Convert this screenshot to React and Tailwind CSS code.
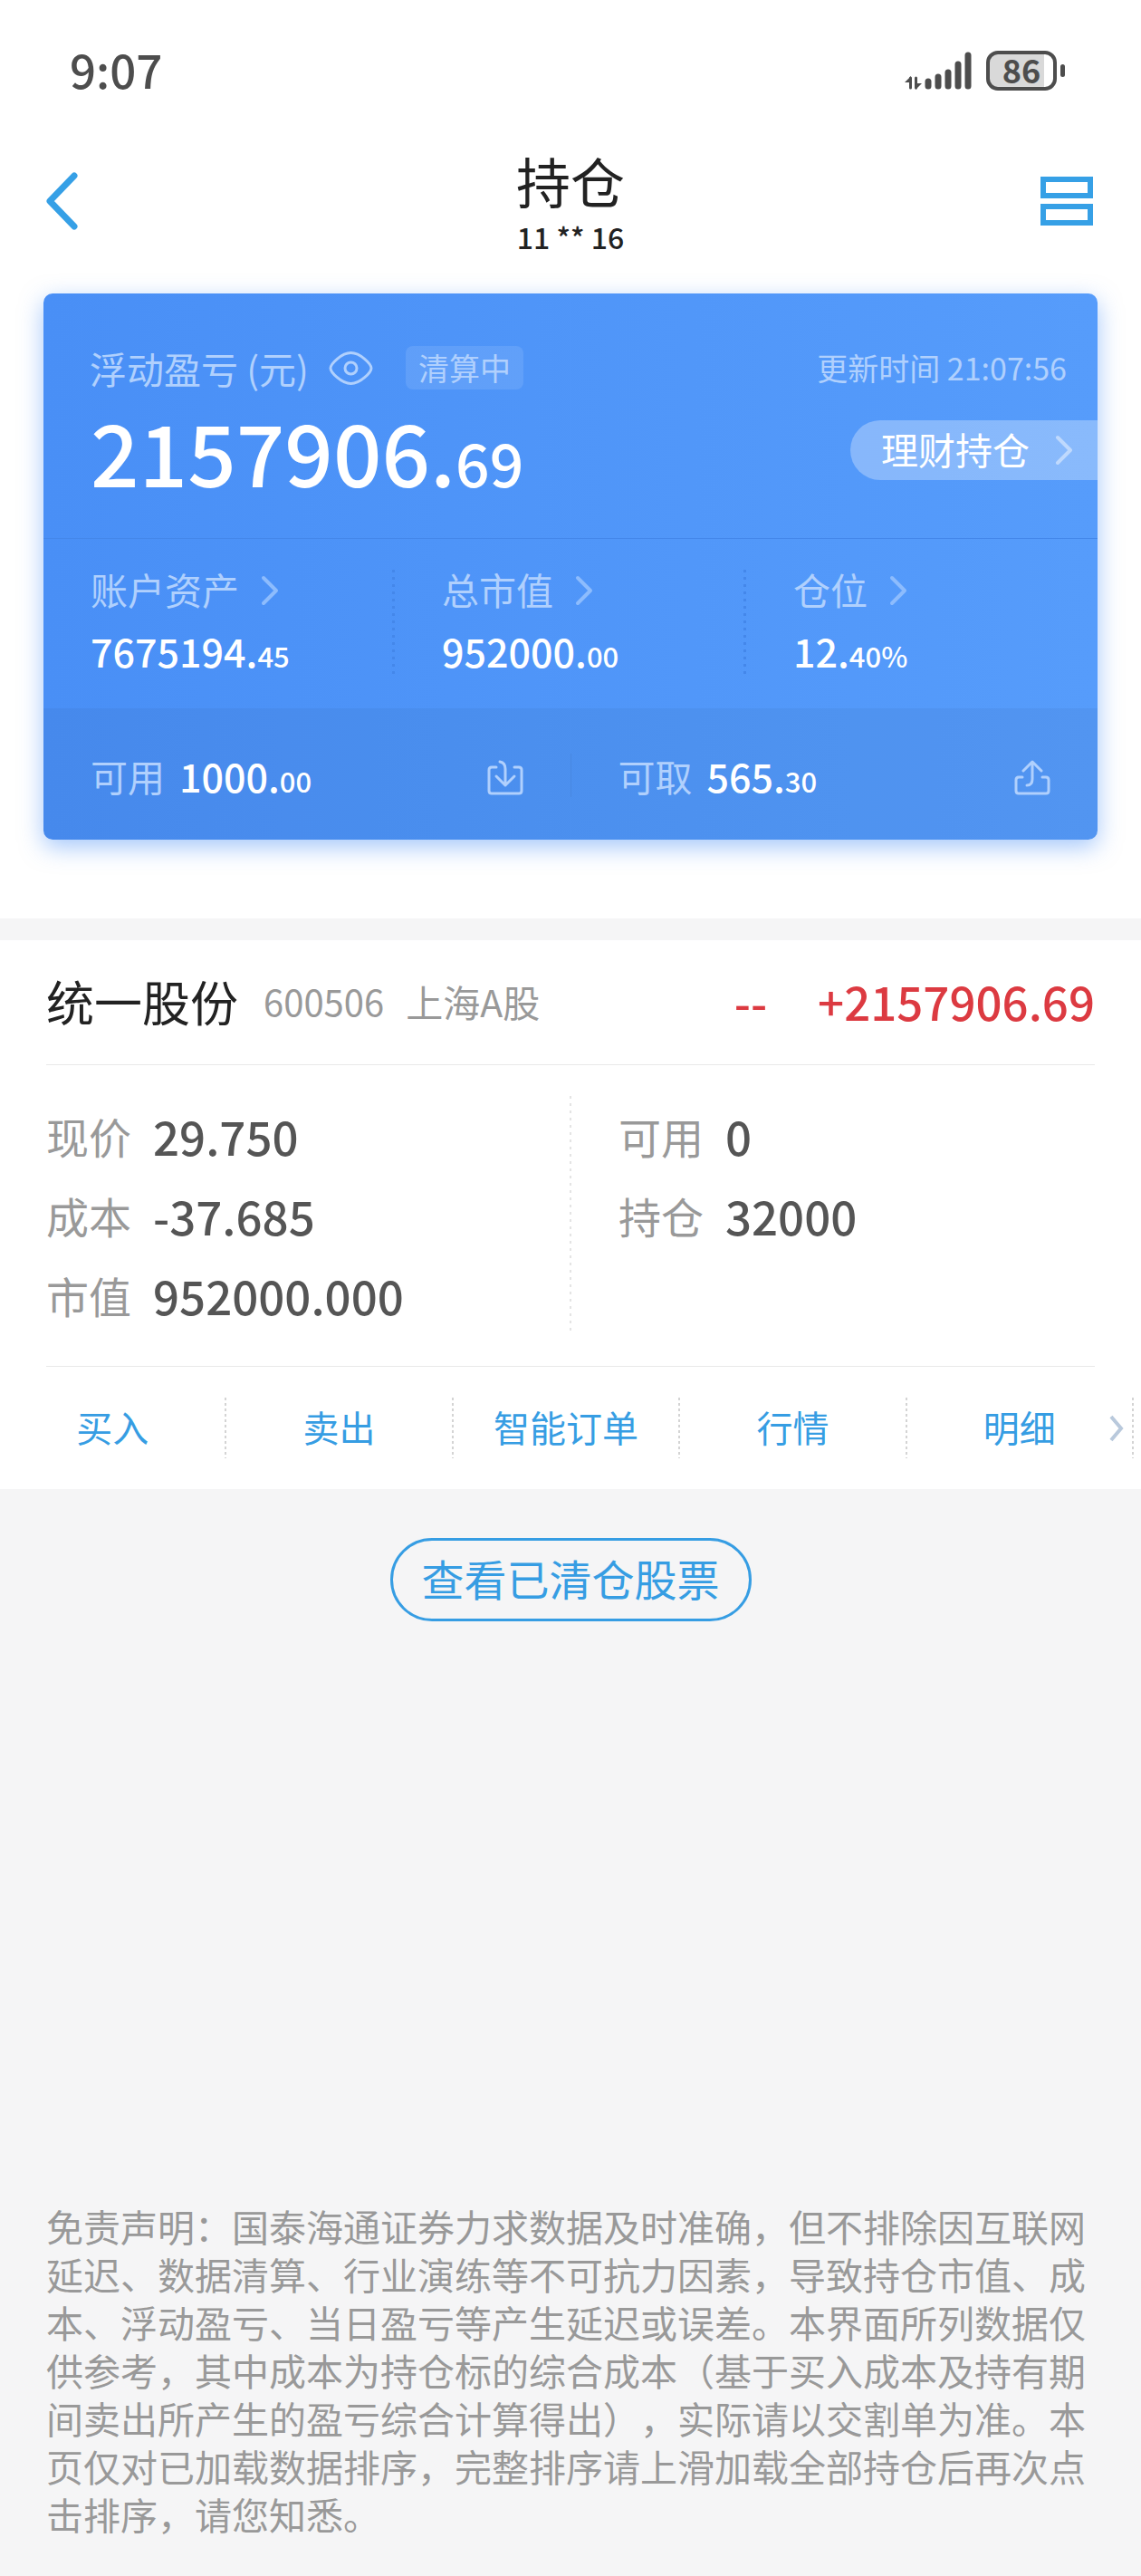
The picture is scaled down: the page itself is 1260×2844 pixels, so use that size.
const holding = {
  name: '统一股份',
  code: '600506',
  market: '上海A股',
  change: '--',
  profit: '+2157906.69',
};

const leftStats = [
  { label: '现价', value: '29.750' },
  { label: '成本', value: '-37.685' },
  { label: '市值', value: '952000.000' },
];

const rightStats = [
  { label: '可用', value: '0' },
  { label: '持仓', value: '32000' },
];

const actions = ['买入', '卖出', '智能订单', '行情', '明细'];

function App() {
  return (
    <div className="min-h-screen flex flex-col bg-[#f5f5f6] font-['Noto_Sans_CJK_SC',sans-serif] text-[#222222]">
      <div className="bg-white pb-[87px]">
        <StatusBar />
        <NavBar />
        <AssetCard />
      </div>

      {/* Holding */}
      <section className="mt-6 bg-white">
        <div className="mx-[51px] h-[138px] pb-1 flex items-center border-b border-[#e8e8e8]">
          <h2 className="text-[53px] leading-[64px]">{holding.name}</h2>
          <span className="ml-7 text-[40px] leading-[64px] text-[#999999]">{holding.code}</span>
          <span className="ml-6 text-[41px] leading-[64px] text-[#999999]">{holding.market}</span>
          <span className="ml-auto text-[51px] leading-[64px] font-medium text-[#dc3a41]">{holding.change}</span>
          <span className="ml-14 text-[51px] leading-[64px] font-medium text-[#dc3a41]">{holding.profit}</span>
        </div>

        <div className="mx-[51px] pt-[34px] pb-[34px] flex border-b border-[#e8e8e8]">
          <StatList items={leftStats} />
          <div className="w-[2px] bg-[repeating-linear-gradient(to_bottom,#e4e4e4_0_3px,transparent_3px_8px)]"></div>
          <StatList items={rightStats} indent />
        </div>

        {/* Actions */}
        <nav className="relative h-[135px] pr-2 flex items-center">
          {actions.map((action) => (
            <button key={action} className="flex-1 h-[67px] flex items-center text-[40px] leading-[60px] text-[#369de3]">
              <span className="flex-1 text-center pb-1">{action}</span>
              <span className="w-[2px] h-full bg-[repeating-linear-gradient(to_bottom,#d4d4d4_0_3px,transparent_3px_6px)]"></span>
            </button>
          ))}
          <svg className="absolute right-[18px] top-[53px] w-[18px] h-[30px]" viewBox="0 0 18 30" fill="none" stroke="#b9c9dc" strokeWidth="4">
            <path d="M3 2l11 13L3 28" />
          </svg>
        </nav>
      </section>

      <button className="mt-[54px] mb-20 mx-auto h-[92px] px-8 pb-1 rounded-full border-3 border-[#369de3] text-[47px] leading-[68px] text-[#369de3]">
        查看已清仓股票
      </button>

      <p className="mt-auto mx-[51px] pb-[42px] text-[41px] leading-[53px] text-[#999999] [text-spacing-trim:space-all]">
        免责声明：国泰海通证券力求数据及时准确，但不排除因互联网延迟、数据清算、行业演练等不可抗力因素，导致持仓市值、成本、浮动盈亏、当日盈亏等产生延迟或误差。本界面所列数据仅供参考，其中成本为持仓标的综合成本（基于买入成本及持有期间卖出所产生的盈亏综合计算得出），实际请以交割单为准。本页仅对已加载数据排序，完整排序请上滑加载全部持仓后再次点击排序，请您知悉。
      </p>
    </div>
  );
}

function StatusBar() {
  return (
    <div className="h-[152px] pl-[77px] pr-[84px] flex items-center justify-between text-[#4d4d4d]">
      <span className="text-[51px] leading-[64px] font-medium">9:07</span>
      <div className="pt-1 flex items-center">
        <svg className="w-[74px] h-[42px] mr-4" viewBox="0 0 74 42" fill="none" stroke="currentColor">
          <g strokeWidth="7" strokeLinecap="round">
            <path d="M26 33v5M37 28v10M48 23v15M59 14v24M70 4v34" />
          </g>
          <path d="M6.500 29v11M12.500 29v11" strokeWidth="3" strokeLinecap="round" />
          <path d="M0 34l7-7v7zM19 35l-7 7v-7z" fill="currentColor" stroke="none" />
        </svg>
        <div className="w-[78px] h-11 rounded-[13px] border-4 border-[#4d4d4d] bg-[linear-gradient(to_right,#d9d9d9_86%,#ffffff_86%)] flex items-center justify-center">
          <span className="pb-1 text-[36px] leading-9 font-bold">86</span>
        </div>
        <div className="ml-1 w-[5px] h-[14px] rounded-full bg-[#4d4d4d]"></div>
      </div>
    </div>
  );
}

function NavBar() {
  return (
    <header className="h-[140px] mb-8 px-[51px] flex items-center justify-between">
      <button aria-label="返回" className="w-[60px]">
        <svg className="w-9 h-16" viewBox="0 0 36 64" fill="none" stroke="#36a0e6" strokeWidth="7" strokeLinecap="round" strokeLinejoin="round">
          <path d="M31 4L4 32l27 28" />
        </svg>
      </button>
      <div className="pt-[2px] text-center">
        <h1 className="text-[60px] leading-[76px]">持仓</h1>
        <p className="text-[32px] leading-[48px] font-medium">11 ** 16</p>
      </div>
      <button aria-label="菜单" className="w-[60px]">
        <svg className="w-[58px] h-[56px]" viewBox="0 0 58 56" fill="none" stroke="#36a0e6" strokeWidth="6">
          <path d="M3 4h52v18H3zM3 34h52v18H3z" />
        </svg>
      </button>
    </header>
  );
}

function AssetCard() {
  return (
    <section className="mx-12 rounded-[10px] overflow-hidden bg-linear-to-r from-[#498ff6] to-[#569cfb] text-white shadow-[0_8px_26px_rgba(74,144,247,0.5)]">
      <div className="pt-[58px] pb-12">
        <div className="h-12 pl-[51px] pr-[34px] flex items-center text-[#b0d0fd]">
          <span className="text-[41px] leading-[48px]">浮动盈亏 (元)</span>
          <svg className="ml-[22px] w-[49px] h-[37px]" viewBox="0 0 49 37" fill="none" stroke="currentColor" strokeWidth="3">
            <path d="M2 18.5C2 14 14 1.5 24.5 1.5S47 14 47 18.5 35 35.5 24.5 35.5 2 23 2 18.5z" />
            <circle cx="24.5" cy="18.5" r="6.5" />
          </svg>
          <span className="ml-9 px-[14px] rounded-lg bg-white/10 text-[34px] leading-[48px]">清算中</span>
          <span className="ml-auto text-[34px] leading-[48px]">更新时间 21:07:56</span>
        </div>
        <div className="mt-[18px] pl-[52px] flex items-center justify-between">
          <p className="text-[94px] leading-[98px] font-medium">
            2157906.<span className="text-[66px] leading-none">69</span>
          </p>
          <button className="h-[66px] pl-[34px] pr-[27px] flex items-center rounded-l-full bg-white/30">
            <span className="pb-1 text-[41px] leading-[50px]">理财持仓</span>
            <Chevron className="ml-7 text-[#bfd9fd]" />
          </button>
        </div>
      </div>

      <div className="pt-[30px] pb-[38px] grid grid-cols-3 border-t border-[#4487ea]">
        <Asset label="账户资产" whole="7675194." decimal="45" divider />
        <Asset label="总市值" whole="952000." decimal="00" divider />
        <Asset label="仓位" whole="12." decimal="40%" />
      </div>

      <div className="h-[145px] pt-[2px] flex items-center bg-black/4">
        <Cash label="可用" whole="1000." decimal="00">
          <path d="M10 8H5q-3 0-3 3v23q0 3 3 3h30q3 0 3-3V11q0-3-3-3h-5" />
          <path d="M14 2q6 1 6 8v18M10 18l10 10 10-10" />
        </Cash>
        <div className="w-px h-12 bg-black/5"></div>
        <Cash label="可取" whole="565." decimal="30">
          <path d="M9 19H5q-3 0-3 3v12q0 3 3 3h30q3 0 3-3V22q0-3-3-3h-4" />
          <path d="M14 28q6 0 6-7V3M10 12l10-10 10 10" />
        </Cash>
      </div>
    </section>
  );
}

function Asset({ label, whole, decimal, divider }) {
  return (
    <div className="pl-[52px] flex justify-between">
      <div>
        <button className="flex items-center text-[41px] leading-[50px] text-[#b0d0fd]">
          {label}
          <Chevron className="ml-6 mt-1 text-[#8dbcfd]" />
        </button>
        <p className="mt-[18px] h-[50px] text-[43px] leading-[50px] font-medium">
          {whole}<span className="text-[31px] leading-none">{decimal}</span>
        </p>
      </div>
      {divider && (
        <div className="w-[3px] h-[115px] mt-1 bg-[repeating-linear-gradient(to_bottom,#4487ea_0_3px,transparent_3px_8px)]"></div>
      )}
    </div>
  );
}

function Cash({ label, whole, decimal, children }) {
  return (
    <div className="flex-1 px-[52px] flex items-center">
      <span className="text-[41px] leading-[50px] text-[#b0d0fd]">{label}</span>
      <p className="ml-4 h-[50px] text-[43px] leading-[50px] font-medium">
        {whole}<span className="text-[31px] leading-none">{decimal}</span>
      </p>
      <svg className="ml-auto mt-[6px] w-10 h-[39px] text-[#b0d0fd]" viewBox="0 0 40 39" fill="none" stroke="currentColor" strokeWidth="3" strokeLinecap="round" strokeLinejoin="round">
        {children}
      </svg>
    </div>
  );
}

function StatList({ items, indent }) {
  return (
    <dl className={indent ? 'w-1/2 pl-[52px]' : 'w-1/2'}>
      {items.map((item) => (
        <div key={item.label} className="h-[88px] flex items-center">
          <dt className="text-[47px] leading-[64px] text-[#999999]">{item.label}</dt>
          <dd className="ml-6 text-[51px] leading-[64px] font-medium text-[#555555]">{item.value}</dd>
        </div>
      ))}
    </dl>
  );
}

function Chevron({ className }) {
  return (
    <svg className={`w-[20px] h-[34px] ${className}`} viewBox="0 0 20 34" fill="none" stroke="currentColor" strokeWidth="4" strokeLinecap="round" strokeLinejoin="round">
      <path d="M3 3l14 14L3 31" />
    </svg>
  );
}

export default App;
